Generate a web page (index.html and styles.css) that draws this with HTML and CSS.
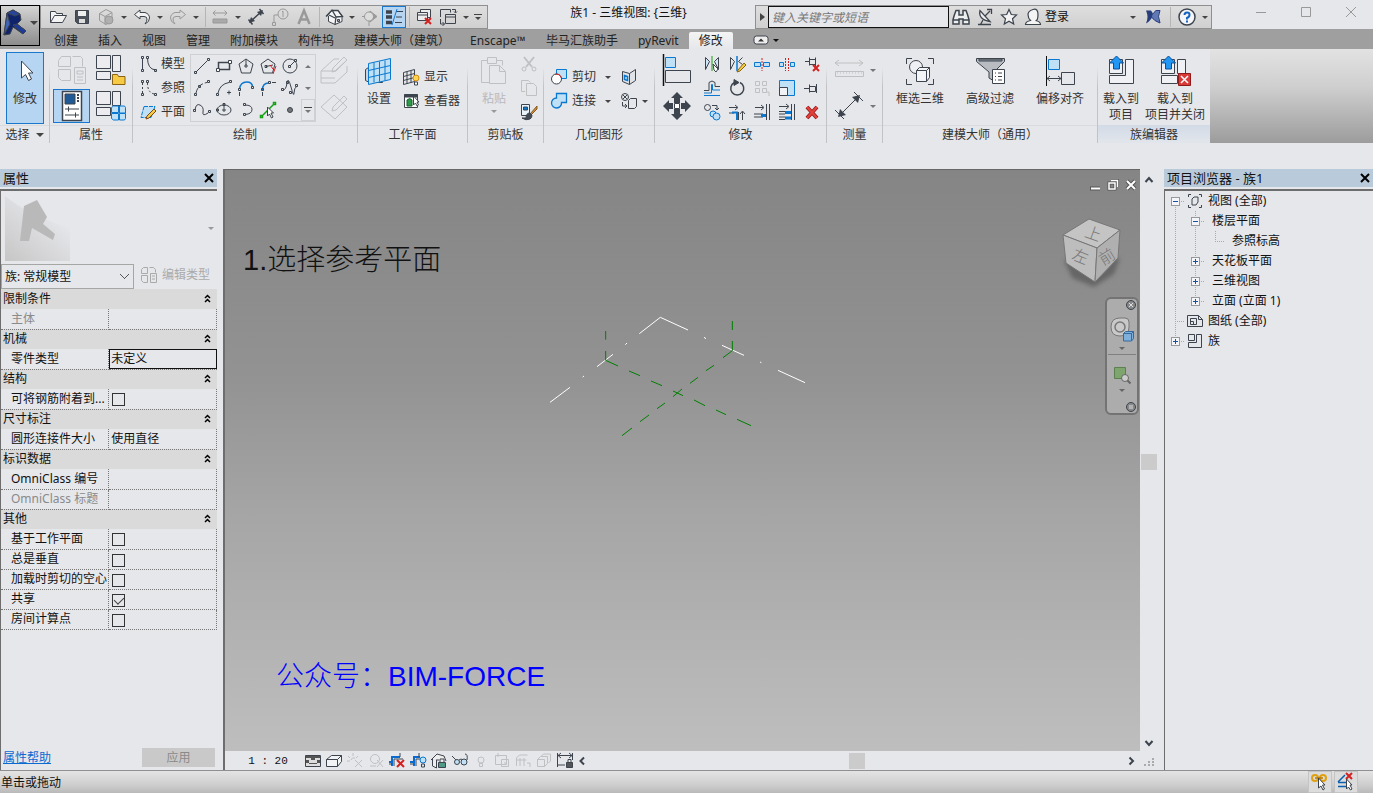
FILE: index.html
```html
<!DOCTYPE html>
<html lang="zh-CN">
<head>
  <meta charset="UTF-8"/>
  <meta name="viewport" content="width=device-width,initial-scale=1"/>
  <title>族1 - 三维视图: {三维}</title>
  <link rel="stylesheet" href="styles.css">
</head>
<body>
  <header class="top">
    <button class="app-btn" aria-label="应用程序菜单">
      <svg width="24" height="28" viewBox="0 0 24 28"><path d="M4 4 10 1 17 5 18 11 14 15 23 22 20 25 10 18 7 25 1 26z" fill="#10246b"/><path d="M4 4 10 1 17 5 12 7z" fill="#27459c"/><path d="M10 16 14 15 23 22 20 25z" fill="#1b3c9c"/><path d="M4 4 7 15 1 26z" fill="#3f64b8"/></svg>
      <i class="caret"></i>
    </button>
    <div class="titlebar">
      <div class="qat">
        <button aria-label="打开"><svg width="20" height="20"><path d="M2.500 15.500V4.500h5l1 2h6v2M2.500 15.500l4-7h12l-4 7z" fill="#f3f3f3"/></svg></button>
        <button aria-label="保存"><svg width="20" height="20"><path d="M3.500 3.500h13v13H5.500l-2-2z" fill="#4a515b"/><path d="M6 4h8v5H6z" fill="#eee" stroke="none"/><path d="M7 12h6v4H7z" fill="#ddd" stroke="none"/></svg></button>
        <button aria-label="同步"><svg class="dim" width="20" height="20"><path d="M3.500 6.500 10 2.500l6 3v9l-6 3-6.500-4zM3.500 6.500 9 9.500l7-4M9 9.500v8"/><circle cx="13" cy="13" r="4" fill="#b0b0b0"/></svg></button>
        <button class="drop" aria-label="同步选项"><i class="caret"></i></button>
        <button aria-label="放弃"><svg width="20" height="20"><path d="M8 3 2.500 7.500 8 12V9.500h4q3 0 3 2.500t-2 5q4.500-2 4.500-6T13 5.500H8z" fill="#f3f3f3"/></svg></button>
        <button class="drop" aria-label="放弃列表"><i class="caret"></i></button>
        <button aria-label="重做"><svg class="dim" width="20" height="20"><path d="M12 3l5.500 4.500L12 12V9.500H8q-3 0-3 2.500t2 5q-4.500-2-4.500-6T7 5.500h5z"/></svg></button>
        <button class="drop" aria-label="重做列表"><i class="caret"></i></button>
        <span class="sep"></span>
        <button aria-label="测量"><svg class="dim" width="20" height="20"><path d="M3 6h14M5.500 3.500 3 6l2.500 2.500M14.500 3.500 17 6l-2.500 2.500"/><path d="M3 12h14v4H3z" fill="#aaa"/></svg></button>
        <button class="drop" aria-label="测量选项"><i class="caret"></i></button>
        <button aria-label="对齐尺寸标注"><svg width="20" height="20"><path d="M5 14 15 5M2.500 12.500l4 5M13.500 2l4 5" stroke-width="1.500"/><path d="M3 16l2-6 4 4zM17 3l-2 6-4-4z" fill="#3d444e" stroke="none"/></svg></button>
        <button aria-label="按类别标记"><svg class="dim" width="20" height="20"><circle cx="13" cy="7" r="5"/><path d="M12 5l1-1v6M8 8H4v7M2.500 15.500h3v3h-3z"/></svg></button>
        <button aria-label="文字"><svg class="dim" width="20" height="20"><path d="M4.500 17 10 3.500 15.500 17M6.500 12.500h7" stroke-width="2.500"/></svg></button>
        <span class="sep"></span>
        <button aria-label="默认三维视图"><svg width="20" height="20"><path d="m3 8.500 5-5h6l4 5.500v5.500l-7 3-6.500-3V9z" fill="#f5f5f5"/><path d="M2 9.500 8 3l4 7-1 7.500M5 8l6 3M8 3.500l6 0 4.500 6-6.500.500" stroke-width="1.300"/><path d="M13.500 12.500h2v2h-2z" fill="#aab"/></svg></button>
        <button class="drop" aria-label="三维视图选项"><i class="caret"></i></button>
        <button aria-label="剖面"><svg class="dim" width="20" height="20"><path d="M10 4l7 5.500-7 5.500z" fill="#999"/><circle cx="9" cy="9.500" r="4.500" fill="#ddd"/><path d="M9 14v5M2 9.500h3"/></svg></button>
        <button class="on" aria-label="细线"><svg width="20" height="20"><path d="M2 5h6M2 10h6M2 15.500h6" stroke-width="3.500"/><path d="M12 4.500h7M12 10h6M11 15.500h7"/><path d="M13 2 8 18" stroke="#1478d2"/></svg></button>
        <span class="sep"></span>
        <button aria-label="关闭隐藏窗口"><svg width="20" height="20"><path d="M6.500 6V2.500h10v8h-3M3.500 5.500h10v8H3.500z" fill="#eee"/><path d="M3.500 8h10"/><path d="m11 11 6 6m0-6-6 6" class="red thick"/></svg></button>
        <button aria-label="切换窗口"><svg width="20" height="20"><path d="M2.500 10V2.500h10v3M7.500 7.500h10v9h-10zM7.500 10h10M14 2.500h3.500v3M16 4.500l1.500 1.500L19 4.500M2.500 12v5h4M4.500 15l2 2-2 2"/></svg></button>
        <button class="drop" aria-label="窗口列表"><i class="caret"></i></button>
        <button class="drop more" aria-label="自定义快速访问工具栏"><i class="caret"></i></button>
      </div>
      <h1>族1 - 三维视图: {三维}</h1>
      <div class="infocenter">
        <button class="drop" aria-label="展开搜索"><i class="caret right"></i></button>
        <input type="text" placeholder="键入关键字或短语" aria-label="搜索">
        <button aria-label="搜索帮助"><svg width="20" height="20"><path d="M3.500 7.500 5 3.500h3V8h4V3.500h3l1.500 4 1.500 5v4.500h-6V12H8v5H2v-4.500zM2 13h6M12 13h6" fill="#eee" stroke-width="1.500"/></svg></button>
        <button aria-label="通讯中心"><svg width="20" height="20"><path d="M5 3.500q-2 9 10 11z" fill="#eee" stroke-width="1.300"/><path d="M3 17.500h13M8 13l-2.500 4.500M10 9l5-5M12 2.500h4.500V7" stroke-width="1.300"/></svg></button>
        <button aria-label="收藏夹"><svg width="20" height="20"><path d="m10 2.500 2.300 5 5.200.500-4 3.700 1.200 5.300L10 14.200 5.300 17l1.200-5.300-4-3.700 5.200-.500z" fill="#f4f4f4" stroke-width="1.200"/></svg></button>
        <button class="login"><svg width="20" height="20"><path d="M2.500 17.500q0-3 5-4-2.500-2.500-2.500-6t5-5 5 5-2.500 6q5 1 5 4z" fill="#f4f4f4" stroke-width="1.200"/></svg>登录</button>
        <button class="drop" aria-label="登录选项"><i class="caret"></i></button>
        <button aria-label="Exchange"><svg width="20" height="20"><path d="M3 3.500h5q2 2 2 5-2 5-7 8 3-6.500 0-13z" fill="#273d7c" stroke="none"/><path d="M17 3.500h-4Q8 8 8.500 10q2.500 4 8.500 6-3-7 0-12.500z" fill="#6079b5" stroke="#273d7c"/></svg></button>
        <span class="sep"></span>
        <button aria-label="帮助"><svg width="20" height="20"><circle cx="10" cy="10" r="8" fill="#f4f6fa" stroke-width="1.500"/><path d="M7.500 8Q7.500 5.500 10 5.500t2.500 2.300T10 11v1.500" stroke="#1565c0" stroke-width="2"/><path d="M9 13.500h2v2H9z" fill="#1565c0" stroke="none"/></svg></button>
        <button class="drop" aria-label="帮助选项"><i class="caret"></i></button>
      </div>
      <div class="winbtns">
        <button aria-label="最小化"><svg width="12" height="12"><path d="M1 6.500h10"/></svg></button>
        <button aria-label="最大化"><svg width="12" height="12"><path d="M1.500 1.500h9v9h-9z"/></svg></button>
        <button aria-label="关闭"><svg width="12" height="12"><path d="m1 1 10 10M11 1 1 11"/></svg></button>
      </div>
    </div>
    <nav class="tabs">
      <button>创建</button><button>插入</button><button>视图</button><button>管理</button><button>附加模块</button><button>构件坞</button><button>建模大师（建筑）</button><button>Enscape™</button><button>毕马汇族助手</button><button>pyRevit</button><button class="active">修改</button>
      <button class="collapse" aria-label="最小化功能区"><svg width="16" height="10"><rect x="1" y="1" width="14" height="8" rx="2.500" fill="#eee"/><path d="m5 6.500 3-3 3 3z" fill="#333" stroke="none"/></svg><i class="caret"></i></button>
    </nav>
  </header>

  <div class="ribbon">
    <section class="panel select">
      <div class="body">
        <button class="big on"><svg width="32" height="32"><path d="M12.500 6v17l4-3.500 3 6 3-1.500-3-6h4.500z" fill="#fff"/></svg>修改</button>
      </div>
      <h2>选择 <i class="caret"></i></h2>
    </section>

    <section class="panel props">
      <div class="body">
        <button aria-label="类型属性"><svg class="faint" width="32" height="32"><path d="M2.500 6.500l3-4h9v10h-12zM16.500 2.500h8l2 2v8M2.500 15.500h12v11h-9l-3-3zM18.500 13.500h11v16h-11zM21 17h6v3h-6zM21 23h6M21 26h6"/></svg></button>
        <button aria-label="族类别和族参数"><svg width="32" height="32"><path d="M1.500 1.500h14v13h-14zM17.500 1.500h8v16h-8zM1.500 17.500h14v8h-14z" fill="#ececf0"/><path d="M17.500 20.500h5l1 2h6.500v8H17.500z" fill="#f6ca45" stroke="#8a6414"/></svg></button>
        <button class="on" aria-label="属性"><svg width="32" height="32"><path d="M6.500 1.500h19v29h-19z" fill="#fff" stroke-width="1.500"/><path d="M9 4h10v10H9z" fill="#1f5a96"/><path d="M21 5h2M21 8h2M21 11h2" stroke-width="2"/><path d="M9 19h14M12.500 16.500v5M9 25h14M19.500 22.500v5"/></svg></button>
        <button aria-label="族类型"><svg width="32" height="32"><path d="M1.500 1.500h14v13h-14zM17.500 1.500h8v14h-8zM1.500 17.500h14v8h-14z" fill="#ececf0"/><path class="b" d="M16.500 17.500l2-1.500h5v6.500h-7zM24.500 16h5l1 1.500v5.500h-6zM16.500 23.500h7V30h-5l-2-1.500zM24.500 23.500h6v5l-1 1.500h-5z"/></svg></button>
      </div>
      <h2>属性</h2>
    </section>

    <section class="panel draw">
      <div class="body">
        <div class="rows">
          <button><svg width="18" height="18"><path d="M3.500 3v12M8.500 3q0 11 8 12M2.500 1.500h2v2h-2zM2.500 14.500h2v2h-2zM7.500 1.500h2v2h-2zM15.500 14.500h2v2h-2z"/></svg>模型</button>
          <button><svg width="18" height="18"><path d="M3.500 4v11M8.500 4q0 10 7 11" stroke-dasharray="2"/><path d="M2.500 1.500h2v2h-2zM2.500 14.500h2v2h-2zM7.500 1.500h2v2h-2zM15.500 14.500h2v2h-2z"/></svg>参照</button>
          <button><svg width="18" height="18"><path class="b" d="M5 3.500h11l-4 11H2z" stroke-dasharray="4 1"/><path d="m7 16 1-3 7-7 2 2-7 7z" fill="#f6ca45" stroke="#7b4b15"/></svg>平面</button>
        </div>
        <div class="gallery">
          <div class="shapes">
            <button aria-label="直线"><svg width="18" height="18"><path d="M3 15 14 4M1.500 14.500h2v2h-2zM14.500 1.500h2v2h-2z"/></svg></button>
            <button aria-label="矩形"><svg width="18" height="18"><path d="M3.500 5.500h11v7h-11z" stroke-width="1.500"/><path d="M1.500 11.500h3v3h-3zM13.500 3.500h3v3h-3z" fill="#fff"/></svg></button>
            <button aria-label="内接多边形"><svg width="18" height="18"><path d="m9 2 7 5-2.500 9h-9L2 7zM9 2v6M8 8h2v2H8z"/></svg></button>
            <button aria-label="外接多边形"><svg width="18" height="18"><path d="m9 2 7 5-2.500 9h-9L2 7zM7 9.500l7-1.500M6 8.500h2v2H6z"/><path d="m17 9-3 8M11 8l3 4" class="red"/></svg></button>
            <button aria-label="圆形"><svg width="18" height="18"><circle cx="9" cy="9" r="7"/><path d="m9 9 5-5M7.500 8.500h2v2h-2zM13.500 2.500h2v2h-2z"/></svg></button>
            <button aria-label="起点-终点-半径弧"><svg width="18" height="18"><path d="M3 14Q5 5 14 3.500" stroke-dasharray="5 2"/><path d="M1.500 14.500h2v2h-2zM14.500 1.500h2v2h-2zM5.500 6.500h2v2h-2z"/></svg></button>
            <button aria-label="圆心-端点弧"><svg width="18" height="18"><path d="M3 14Q5 5 14 3.500M1.500 14.500h2v2h-2zM14.500 1.500h2v2h-2zM12 13.500h4M14 11.500v4"/></svg></button>
            <button aria-label="相切-端点弧"><svg width="18" height="18"><path d="M2.500 10q1-7 7-7t6 5" stroke="#0a78d0" stroke-width="1.500"/><path d="M2.500 13v4M1.500 9.500h2v2h-2zM14.500 7.500h2v2h-2z"/></svg></button>
            <button aria-label="圆角弧"><svg width="18" height="18"><path d="M3.500 11q0-7 6-7" stroke="#0a78d0" stroke-width="1.500"/><path d="M3.500 13v4M13 3.500h4M2.500 9.500h2v2h-2zM9.500 2.500h2v2h-2z"/></svg></button>
            <button aria-label="样条曲线"><svg width="18" height="18"><path d="M2 11q3 0 4-7t4 4 3 6 3-7M.500 9.500h2v2h-2zM5.500 2.500h2v2h-2zM8.500 12.500h2v2h-2zM14.500 5.500h2v2h-2z"/></svg></button>
            <button aria-label="椭圆"><svg width="18" height="18"><path d="M2 9q1-7 5-5t3 7 5 1M.500 8.500h2v2h-2zM15.500 9.500h2v2h-2z"/></svg></button>
            <button aria-label="全椭圆"><svg width="18" height="18"><ellipse cx="9" cy="9" rx="7" ry="5"/><path d="M7 9h4M9 3v8M8 2.500h2v2H8zM1.500 8h2v2h-2z"/></svg></button>
            <button aria-label="半椭圆"><svg width="18" height="18"><path d="M8 4q7 0 7 4.500T8 13.500M6.500 2.500h2v2h-2zM6.500 12.500h2v2h-2z"/></svg></button>
            <button aria-label="拾取线"><svg width="18" height="18"><path d="M3 15 15 3M1.500 14.500h2v2h-2zM14.500 1.500h2v2h-2z" stroke="#16a016" stroke-width="1.500"/><path d="M8.500 6v9l2-2 2 4 1.500-1-2-4h2.500z" fill="#fff"/></svg></button>
            <button aria-label="点图元"><svg width="18" height="18"><circle cx="9" cy="9" r="2.500" fill="#777"/></svg></button>
          </div>
          <div class="scroll">
            <button aria-label="上一行"><i class="caret up"></i></button>
            <button aria-label="下一行"><i class="caret"></i></button>
            <button class="more" aria-label="更多"><i class="caret"></i></button>
          </div>
        </div>
        <div class="pair">
          <button aria-label="拾取面"><svg class="faint" width="32" height="32"><path d="m2 17 13-12h5M28 12v6L16 29H2V17h14l12-11M2 24h14M14 14 25 3l3 3-11 11-4 1z"/></svg></button>
          <button aria-label="拾取工作平面"><svg class="faint" width="32" height="32"><path d="m2 17 13-12 13 12-12 12zM14 17 25 6l3 3-11 11-4 1z"/></svg></button>
        </div>
      </div>
      <h2>绘制</h2>
    </section>

    <section class="panel workplane">
      <div class="body">
        <button class="big"><svg width="32" height="32"><path d="M2.500 14.500l3-2h14v15h-13l-4-2z" fill="#cfd2d8"/><path class="b" d="m5.500 8.500 22-5v21l-22 5z"/><path class="b" d="M11 7.500v20M16.500 6.500v20M22 5.500v20M5.500 15.500l22-5M5.500 22.500l22-5"/></svg>设置</button>
        <div class="rows mid">
          <button><svg width="18" height="18"><path d="m1.500 4.500 11-3v12l-11 3zM5 4v12M9 3v12M1.500 8.500l11-3M1.500 12.500l11-3"/><circle cx="14" cy="10" r="3" fill="#ffd34d" stroke="#d08a10"/><path d="M12.500 14h3v3h-3z" fill="#fff"/></svg>显示</button>
          <button><svg width="18" height="18"><path d="M2.500 2.500h13v13h-13z" fill="#fff"/><path d="M2 4h14" stroke-width="3"/><path d="M5 8q3-3 5 0v6H5z" fill="#2e9a4a" stroke="#14602a"/><path d="M11.500 4v9l2-2 1.500 3 1.500-1-1.500-3H17z" fill="#fff"/></svg>查看器</button>
        </div>
      </div>
      <h2>工作平面</h2>
    </section>

    <section class="panel clip">
      <div class="body">
        <button class="big off"><svg class="faint" width="32" height="32"><path d="M9.500 5.500h-6v22h8M9.500 2.500h9v6h-9zM18.500 5.500h6v5M11.500 10.500h10l6 6v12h-16zM21.500 10.500v6h6"/></svg>粘贴<i class="caret"></i></button>
        <div class="rows">
          <button aria-label="剪切到剪贴板"><svg class="faint" width="18" height="18"><path d="m4 2 8 10M14 2 6 12" stroke-width="2"/><circle cx="4" cy="14" r="2"/><circle cx="14" cy="14" r="2"/></svg></button>
          <button aria-label="复制到剪贴板"><svg class="faint" width="18" height="18"><path d="M5 12.500H1.500v-11h7l2 2M6.500 4.500h7l3 3v9h-10z"/></svg></button>
          <button aria-label="匹配类型属性"><svg width="18" height="18"><path d="M1.500 1.500h8v11h-8z" fill="#e8f3fb"/><path d="M3.500 4h4v3h-4z" fill="#0a78d0"/><path d="M17 3v3l-6 6-1-1z" fill="#c98c3a" stroke="#8a5a1c"/><path d="M10 10q-4 0-4 5H2q4 3 8 1 2-1 2-4z" fill="#444b55"/></svg></button>
        </div>
      </div>
      <h2>剪贴板</h2>
    </section>

    <section class="panel geom">
      <div class="body">
        <div class="rows mid">
          <button><svg width="18" height="18"><path class="b" d="M6.500 1.500h10v9h-10z"/><circle cx="6.500" cy="11" r="5" fill="#fff"/><path d="M5 6.300a5 5 0 0 1 6.500 4.200" class="red"/></svg>剪切</button>
          <button><svg width="18" height="18"><path class="b" d="M6.500 1.500h10v9h-5a5 5 0 1 1-5-4.500z" stroke-width="1.300"/></svg>连接</button>
        </div>
        <div class="rows mid tiny">
          <button aria-label="剪切选项"><i class="caret"></i></button>
          <button aria-label="连接选项"><i class="caret"></i></button>
        </div>
        <div class="rows mid">
          <button aria-label="拆分面"><svg width="18" height="18"><path d="m2.500 3.500 7 2 6-4v11l-6 4-7-3z" fill="#dfe3e8"/><path d="M9.500 5.500v11"/><path class="b" d="m4.500 7.500 3 1v4l-3-1z" stroke-width="1.500"/></svg></button>
          <button aria-label="更多几何图形"><svg width="18" height="18"><circle cx="5" cy="5" r="3.500"/><path d="m3 3 4 4M7 3 3 7M8.500 8.500l2-2h6v8l-2 2h-6zM2.500 10v4h4M5 12l2 2-2 2"/></svg><i class="caret"></i></button>
        </div>
      </div>
      <h2>几何图形</h2>
    </section>

    <section class="panel modify">
      <div class="body">
        <div class="pair">
          <button aria-label="对齐"><svg width="32" height="32"><path d="M2.500 0v32" stroke-width="1.500" stroke="#111"/><path class="b" d="M4.500 3.500h10v10h-10z"/><path d="M4.500 16.500h25v12h-25z"/></svg></button>
          <button aria-label="移动"><svg width="32" height="32"><path d="M16 2l6 6h-3v5h-6V8h-3zM16 30l6-6h-3v-5h-6v5h-3zM2 16l6-6v3h4v6H8v3zM30 16l-6-6v3h-4v6h4v3z" fill="#3d444e" stroke="none"/><path d="M13.500 13.500h5v5h-5z" fill="#fff"/></svg></button>
        </div>
        <div class="tools">
          <button aria-label="镜像-拾取轴"><svg width="18" height="18"><path d="M2.500 2.500l4 4-4 8zM15.500 2.500l-4 4 4 8z" fill="#cfe6f6"/><path d="M9 1v15" stroke="#16a016"/><path d="m10 9 5 5-2 3-2-2z" fill="#fff"/></svg></button>
          <button aria-label="镜像-绘制轴"><svg width="18" height="18"><path d="M2.500 2.500l4 4-4 8zM14.500 2.500l-4 4 4 3"/><path d="M9 1v15" stroke="#0a78d0" stroke-width="1.500"/><path d="m10 15 6-7 2 2-6 6-3 1z" fill="#f6ca45" stroke="#8a6414"/></svg></button>
          <button aria-label="拆分图元"><svg width="18" height="18"><path class="b" d="M1.500 7.500h6v4h-6zM10.500 7.500h6v4h-6z"/><path d="M9 3v13" class="red" stroke-dasharray="2 1"/></svg></button>
          <button aria-label="用间隙拆分"><svg width="18" height="18"><path class="b" d="M1.500 7.500h4v4h-4zM12.500 7.500h4v4h-4z"/><path d="M7.500 3v13M10.500 3v13" class="red" stroke-dasharray="2 1"/></svg></button>
          <button aria-label="解锁"><svg width="18" height="18"><path d="M2 6.500h4M6.500 2.500v8M6.500 4.500h6v5h-6M12.500 2.500v9"/><path d="m10 10 6 6m0-6-6 6" class="red thick"/></svg></button>
          <button aria-label="偏移"><svg width="18" height="18"><path d="M1 11.500h5v-8q3-3 6 0v4h5"/><path d="M1 14h7.500V5.500h1V11H17M1 16.500h16" stroke="#0a78d0"/></svg></button>
          <button aria-label="旋转"><svg width="18" height="18"><path d="M6.500 3.500a6.500 6.500 0 1 0 5.500 0" stroke-width="1.500"/><path d="m6 .500 5 3-5 3z" fill="#3d444e"/></svg></button>
          <button aria-label="阵列"><svg class="faint" width="18" height="18"><path d="M2.500 2.500h4v4h-4zM9.500 2.500h4v4h-4zM2.500 9.500h4v4h-4zM9.500 9.500h4v4h-4zM13 13h3v4"/></svg></button>
          <button aria-label="缩放"><svg width="18" height="18"><path class="b" d="M1.500 1.500h15v15h-15z"/><path d="M1.500 8.500h8v8h-8z" fill="#f1f2f5"/></svg></button>
          <button aria-label="锁定"><svg width="18" height="18"><path d="M1 9.500h5M6.500 5.500v8M6.500 7.500h6v5h-6M13.500 5v9"/></svg></button>
          <button aria-label="复制"><svg width="18" height="18"><circle cx="4.500" cy="4.500" r="3"/><path d="M9 2.500h5v4M12 5l2 2 2-2"/><circle class="b" cx="10" cy="11" r="3"/><circle class="b" cx="13.500" cy="13.500" r="3.500"/></svg></button>
          <button aria-label="修剪为角"><svg width="18" height="18"><path d="M1 4.500h8M7 2l3 2.500L7 7M1 10h5M14.500 17V9M12 11l2.500-3 2.500 3M10.500 17V9"/><path d="M4 9.500h5V17" stroke="#0a78d0" stroke-width="2"/></svg></button>
          <button aria-label="修剪单个"><svg width="18" height="18"><path d="M2 4.500h8M8 2l3 2.500L8 7M1 11h9M1 14h9M13.500 1v16M16.500 1v16"/><path d="M8 12.500h5" stroke="#0a78d0" stroke-width="3"/></svg></button>
          <button aria-label="修剪多个"><svg width="18" height="18"><path d="M1 3.500h9M8 1l3 2.500L8 6M1 8.500h6M1 11h6M1 14h6M1 16.500h6M13.500 1v16M16.500 1v16"/><path d="M7 9.500h6M7 15h6" stroke="#0a78d0" stroke-width="3"/></svg></button>
          <button aria-label="删除"><svg width="18" height="18"><path d="m4 4 10 11M14 4 4 15" stroke="#8f1a1a" stroke-width="4"/><path d="m4 4 10 11M14 4 4 15" stroke="#e2403a" stroke-width="2.500"/></svg></button>
        </div>
      </div>
      <h2>修改</h2>
    </section>

    <section class="panel measure">
      <div class="body">
        <div class="pair">
          <button aria-label="测量两个参照"><svg class="faint" width="32" height="32"><path d="M2 9h28M6 6 2 9l4 3M26 6l4 3-4 3M2.500 17.500h28v5h-28z"/><path d="M4 19h26" stroke-dasharray="1 2"/></svg><i class="caret"></i></button>
          <button aria-label="对齐尺寸"><svg width="32" height="32"><path d="M7 25 25 7M2 20l9 9M21 2l9 9"/><path d="m5 27 2-8 6 6zM27 5l-2 8-6-6z" fill="#3d444e" stroke="none"/></svg><i class="caret"></i></button>
        </div>
      </div>
      <h2>测量</h2>
    </section>

    <section class="panel bim">
      <div class="body">
        <button class="big"><svg width="32" height="32"><path d="M8 3.500H2.500V9M24 3.500h5.500V9M2.500 24v5.500H8M29.500 24v5.500H24"/><circle cx="12" cy="12" r="6.500" fill="#eef0f3"/><path d="m12.500 15.500 3-3h10v10l-3 4h-10zM12.500 15.500h10v11M22.500 15.500l3-3" fill="#f3f4f6"/></svg>框选三维</button>
        <button class="big"><svg width="32" height="32"><path d="M2.500 3.500h28v3L20 17v9l-5-3v-6L2.500 6.500z" fill="#b9bcc1"/><path d="M5 4h23v2H5z" fill="#8b9096"/><path d="M18.500 14.500h12v14h-12z" fill="#fff"/><path d="M21 18h1M21 21.500h1M21 25h1M24 18h4M24 21.500h4M24 25h4"/></svg>高级过滤</button>
        <button class="big"><svg width="32" height="32"><path d="M2.500 1v30" stroke="#111"/><path class="b" d="M4.500 4.500h11v10h-11z"/><path d="M17.500 17.500h13v12h-13zM3 23.500h14M6 21l-3 2.500L6 26M14 21l3 2.500-3 2.500"/></svg>偏移对齐</button>
      </div>
      <h2>建模大师（通用）</h2>
    </section>

    <section class="panel family">
      <div class="body">
        <button class="big"><svg width="32" height="32"><path d="M4.500 4.500h13v14h-13zM20.500 4.500h8v24h-24v-8h16z" fill="#f0f1f4"/><path d="m11.500 1 7 7h-4v6h-6V8h-4z" fill="#2196f3" stroke="#0b4f96"/></svg>载入到<br>项目</button>
        <button class="big wide"><svg width="32" height="32"><path d="M2.500 4.500h13v14h-13zM18.500 4.500h8v14h-8zM2.500 20.500h16v8h-16z" fill="#f0f1f4"/><path d="m9.500 1 7 7h-4v6h-6V8h-4z" fill="#2196f3" stroke="#0b4f96"/><path d="M19.500 18.500h12v12h-12z" fill="#d83a3a" stroke="#8f1a1a"/><path d="m22 21 7 7m0-7-7 7" stroke="#fff" stroke-width="1.500"/></svg>载入到<br>项目并关闭</button>
      </div>
      <h2>族编辑器</h2>
    </section>
    <div class="tail"></div>
  </div>

  <main>
    <aside class="properties">
      <div class="dock-title"><h3>属性</h3><button aria-label="关闭属性"><svg width="10" height="10"><path d="m1 1 8 8M9 1 1 9"/></svg></button></div>
      <div class="dock-body">
        <div class="preview">
          <svg width="65" height="65" viewBox="0 0 65 65">
            <defs><linearGradient id="pv" x1="0" y1="1" x2=".7" y2=".2"><stop offset="0" stop-color="#c6c6c6"/><stop offset="1" stop-color="#e6e7eb"/></linearGradient></defs>
            <path d="M0 0q25 20 65 32v33H0z" fill="url(#pv)" stroke="none"/>
            <path d="M19 10 32 4l10 17-4 7 12 10-2 6-21-12-3 13-9 0z" fill="#b9b9b9" stroke="none"/>
          </svg>
          <i class="caret"></i>
        </div>
        <div class="type-row">
          <select aria-label="族类型"><option>族: 常规模型</option></select>
          <button disabled><svg class="faint" width="18" height="18"><path d="M1.500 3.500l2-2h4v6h-6zM9.500 1.500h4l2 2v3M1.500 9.500h6v7h-4l-2-2zM10.500 7.500h6v9h-6zM12 10h3M12 13h3"/></svg>编辑类型</button>
        </div>
        <table>
          <tbody>
            <tr class="cat"><th colspan="2">限制条件<svg width="9" height="9"><path d="m2 4 2.500-2.500L7 4M2 8l2.500-2.500L7 8"/></svg></th></tr>
            <tr class="off"><td>主体</td><td></td></tr>
            <tr class="cat"><th colspan="2">机械<svg width="9" height="9"><path d="m2 4 2.500-2.500L7 4M2 8l2.500-2.500L7 8"/></svg></th></tr>
            <tr><td>零件类型</td><td class="focus">未定义</td></tr>
            <tr class="cat"><th colspan="2">结构<svg width="9" height="9"><path d="m2 4 2.500-2.500L7 4M2 8l2.500-2.500L7 8"/></svg></th></tr>
            <tr><td><label for="p1">可将钢筋附着到...</label></td><td><input type="checkbox" id="p1"></td></tr>
            <tr class="cat"><th colspan="2">尺寸标注<svg width="9" height="9"><path d="m2 4 2.500-2.500L7 4M2 8l2.500-2.500L7 8"/></svg></th></tr>
            <tr><td>圆形连接件大小</td><td>使用直径</td></tr>
            <tr class="cat"><th colspan="2">标识数据<svg width="9" height="9"><path d="m2 4 2.500-2.500L7 4M2 8l2.500-2.500L7 8"/></svg></th></tr>
            <tr><td>OmniClass 编号</td><td></td></tr>
            <tr class="off"><td>OmniClass 标题</td><td></td></tr>
            <tr class="cat"><th colspan="2">其他<svg width="9" height="9"><path d="m2 4 2.500-2.500L7 4M2 8l2.500-2.500L7 8"/></svg></th></tr>
            <tr><td><label for="p2">基于工作平面</label></td><td><input type="checkbox" id="p2"></td></tr>
            <tr><td><label for="p3">总是垂直</label></td><td><input type="checkbox" id="p3"></td></tr>
            <tr><td><label for="p4">加载时剪切的空心</label></td><td><input type="checkbox" id="p4"></td></tr>
            <tr><td><label for="p5">共享</label></td><td><input type="checkbox" id="p5" checked></td></tr>
            <tr><td><label for="p6">房间计算点</label></td><td><input type="checkbox" id="p6"></td></tr>
          </tbody>
        </table>
        <div class="dock-foot"><a href="#">属性帮助</a><button disabled>应用</button></div>
      </div>
    </aside>

    <section class="view">
      <div class="canvas">
        <p class="note step">1.选择参考平面</p>
        <p class="note credit">公众号：BIM-FORCE</p>
        <svg class="planes" width="300" height="150" viewBox="0 0 900 450">
          <path stroke="#fff" d="M60 307 120 262M158 231 162 228M201 200 249 163M286 134 291 129M328 101 391 52 474 90M522 112 528 116M576 136 642 166M690 186 694 188M744 211 825 248"/>
          <path stroke="#008000" d="M227 93V119M227 153V181M607 63V90M607 123V152M227 181 264 198M297 213 330 227M363 243 396 257M429 273 459 287M492 300 525 317M558 330 588 344M621 358 663 377M607 152 579 173M552 196 528 212M504 232 480 250M456 267 429 290M405 309 381 326M357 345 330 365M306 384 276 407"/>
        </svg>
        <div class="doc-btns">
          <button aria-label="最小化视图"><svg width="12" height="12"><path d="M1 9.500h10" stroke="#555" stroke-width="4"/><path d="M2 9.500h9" stroke="#fff" stroke-width="2"/></svg></button>
          <button aria-label="还原视图"><svg width="12" height="12"><path d="M4 1.500h6.500V8M2 4h6v6H2z" stroke="#555" stroke-width="3"/><path d="M4 1.500h6.500V8M2 4h6v6H2z" stroke="#fff" stroke-width="1.500"/></svg></button>
          <button aria-label="关闭视图"><svg width="12" height="12"><path d="m2 2 8 8M10 2l-8 8" stroke="#555" stroke-width="4"/><path d="m2 2 8 8M10 2l-8 8" stroke="#fff" stroke-width="2"/></svg></button>
        </div>
        <svg class="cube" width="64" height="78" viewBox="0 0 64 78">
          <defs><filter id="soft" x="-30%" y="-50%" width="160%" height="200%"><feGaussianBlur stdDeviation="2"/></filter></defs>
          <path d="M4 44 60 42 54 58 34 71 12 62z" fill="#666" stroke="none" filter="url(#soft)"/>
          <path d="M3 19 29 3 60 14 37 32z" fill="#c4c4c4"/><path d="M3 19 37 32 35 66 6 47z" fill="#bdbdbd"/><path d="M37 32 60 14 58 42 35 66z" fill="#b0b0b0"/>
          <text x="25" y="23" transform="rotate(20 32 18)">上</text>
          <text x="12" y="46" transform="rotate(22 20 42)">左</text>
          <text x="40" y="46" transform="rotate(-32 48 42)">前</text>
        </svg>
        <div class="navbar">
          <button aria-label="关闭导航栏"><svg width="10" height="10"><circle cx="5" cy="5" r="4.500" fill="#888"/><path d="m3 3 4 4M7 3 3 7" stroke="#ddd"/></svg></button>
          <button class="wheel" aria-label="控制盘"><svg width="28" height="28"><path d="M3 12Q3 3 12 3h5q4 0 4 4v5q0 9-9 9t-9-9z" fill="#c9c9c9" stroke="#777"/><circle cx="12" cy="12" r="5" fill="#c9c9c9" stroke="#777" stroke-width="1.500"/><path d="m15.500 18.500 2-2h8v7l-2 2.500h-8zM15.500 18.500h8v7M23.500 18.500l2-2" fill="#7fb0dc" stroke="#37699c"/></svg><i class="caret"></i></button>
          <button class="zoom" aria-label="缩放"><svg width="20" height="20"><path d="M2.500 2.500h11v11h-11z" fill="#7fa56e" stroke="#5c8050"/><circle cx="13" cy="13" r="3.500" fill="#ccc" stroke="#666"/><path d="m15.500 15.500 3 3" stroke="#666" stroke-width="2"/></svg><i class="caret"></i></button>
          <button aria-label="导航栏选项"><svg width="10" height="10"><circle cx="5" cy="5" r="4.500" fill="#888"/><path d="M3 4h4M3 6h4" stroke="#ddd"/></svg></button>
        </div>
      </div>
      <div class="vscroll">
        <button aria-label="向上滚动"><svg width="10" height="10"><path d="M1.500 7 5 3l3.500 4"/></svg></button>
        <span class="thumb"></span>
        <button aria-label="向下滚动"><svg width="10" height="10"><path d="M1.500 3 5 7l3.500-4"/></svg></button>
        <svg class="grip" width="10" height="10"><path d="M8 2h2M4 5h2M8 5h2M0 8h2M4 8h2M8 8h2" stroke="#aaa"/></svg>
      </div>
      <div class="viewbar">
        <button class="scale">1 : 20</button>
        <button aria-label="详细程度"><svg width="18" height="18"><path d="M1.500 3.500h15v11h-15z" fill="#ddd"/><path d="M2 4h14v2H2zM2 8h3v3H2zM7 6h4v2H7zM13 8h3v3h-3zM5 11h8v1H5z" fill="#555" stroke="none"/></svg></button>
        <button aria-label="视觉样式"><svg width="18" height="18"><path d="m1.500 7.500 5-4h10v6l-4 5h-11zM1.500 7.500h11v7M12.500 7.500l4-4" fill="#f2f3f5"/></svg></button>
        <button aria-label="日光路径"><svg class="faint" width="18" height="18"><path d="M7 1v3M2 4l2 2M1 9h3M12 4l-2 2M5 8q1-3 4-2M9 8l7 7m0-7-7 7"/></svg></button>
        <button aria-label="阴影"><svg class="faint" width="18" height="18"><circle cx="8" cy="7" r="4.500"/><path d="M3 14h6M10 8l6 7m0-7-6 7"/></svg></button>
        <button aria-label="裁剪视图"><svg width="18" height="18"><path d="M1 10h3M4 14V5h8" stroke="#0a6ad0" stroke-width="2"/><path d="M6 14V7h9M12 1v4M1 12h3"/><path d="m9 8 7 7m0-7-7 7" class="red thick"/></svg></button>
        <button aria-label="显示裁剪区域"><svg width="18" height="18"><path d="M1 10h3M5 14V5h6" stroke="#0a6ad0" stroke-width="2"/><path d="M7 14V7h4M10 1v4M1 12h3"/><circle class="b" cx="14" cy="8" r="3"/><path d="M12.500 12h3v3h-3z"/></svg></button>
        <button aria-label="锁定三维视图"><svg width="18" height="18"><path d="M1 8l6-6 7 2 2 5M2.500 7v7l4 2V8M6 8h3" fill="#eee"/><path d="M8.500 10.500h7v5h-7z" fill="#4f9a84"/><path d="M10 10V7h4v3"/></svg></button>
        <button aria-label="临时隐藏"><svg width="18" height="18"><path d="M1 4l4 4M8 8q2-2 4 0M14 2q3 0 2 6"/><circle cx="6" cy="10" r="2.500" fill="#bfe0f5"/><circle cx="13" cy="10" r="3" fill="#bfe0f5"/></svg></button>
        <button aria-label="显示隐藏的图元"><svg class="faint" width="18" height="18"><circle cx="9" cy="8" r="3"/><path d="M7.500 11.500h3v3h-3z"/></svg></button>
        <button aria-label="临时视图属性"><svg class="faint" width="18" height="18"><path d="M2.500 3.500h11v9h-11zM8.500 7.500h7v7h-7zM11 11h3M5 1v4"/></svg></button>
        <button aria-label="分析模型"><svg class="faint" width="18" height="18"><path d="M2.500 14V6l3-3h8M2.500 8h10M6 14V6M10 14V6M13 11h3v4"/></svg></button>
        <button aria-label="位移集"><svg class="faint" width="18" height="18"><path d="m2.500 7.500 3-3h7v7l-3 3h-7zM6.500 4l2-2h7v7l-2 2M2.500 7.500h7v7"/></svg></button>
        <button aria-label="显示约束"><svg width="18" height="18"><path d="M1.500 1v14M16.500 1v7M2 3.500h14M5 1 2 3.500 5 6M13 1l3 2.500L13 6M2 13h7"/><path d="M10.500 10.500h6v5h-6z" fill="#555"/><path d="M12 10V7.500h3V10"/></svg></button>
        <button class="arrow" aria-label="向左滚动"><svg width="10" height="10"><path d="M7 1.500 3.500 5 7 8.500"/></svg></button>
        <span class="thumb"></span>
        <button class="arrow" aria-label="向右滚动"><svg width="10" height="10"><path d="M3.500 1.500 7 5 3.500 8.500"/></svg></button>
      </div>
    </section>

    <aside class="browser">
      <div class="dock-title"><h3>项目浏览器 - 族1</h3><button aria-label="关闭项目浏览器"><svg width="10" height="10"><path d="m1 1 8 8M9 1 1 9"/></svg></button></div>
      <ul class="dock-body tree">
        <li><span class="cell start arm"><button class="minus" aria-label="折叠"></button></span><span class="cell"><svg width="16" height="16"><path d="M4 1.500H1.500V4M12 1.500h2.500V4M1.500 12v2.500H4M14.500 12v2.500H12M5 6l2-2h4v5l-2 3H5z"/></svg></span><b>视图 (全部)</b></li>
        <li><span class="cell line"></span><span class="cell line arm"><button class="minus" aria-label="折叠"></button></span><b class="sub">楼层平面</b></li>
        <li><span class="cell line"></span><span class="cell line"></span><span class="cell end arm"></span><b class="sub">参照标高</b></li>
        <li><span class="cell line"></span><span class="cell line arm"><button class="plus" aria-label="展开"></button></span><b class="sub">天花板平面</b></li>
        <li><span class="cell line"></span><span class="cell line arm"><button class="plus" aria-label="展开"></button></span><b class="sub">三维视图</b></li>
        <li><span class="cell line"></span><span class="cell end arm"><button class="plus" aria-label="展开"></button></span><b class="sub">立面 (立面 1)</b></li>
        <li><span class="cell line arm"></span><span class="cell"><svg width="16" height="16"><path d="M.500 2.500h11l4 4v7H.500zM11.500 2.500v4h4M3.500 5.500h6v6h-6zM3.500 8.500h3v3"/></svg></span><b>图纸 (全部)</b></li>
        <li><span class="cell end arm"><button class="plus" aria-label="展开"></button></span><span class="cell"><svg width="16" height="16"><path d="M1.500 1.500h6v6h-6zM9.500 1.500h5v13h-13v-5h8z"/></svg></span><b>族</b></li>
      </ul>
    </aside>
  </main>

  <footer class="status">
    <span>单击或拖动</span>
    <button aria-label="选择链接"><svg width="20" height="20"><circle cx="5" cy="6" r="3" stroke="#e0a010" stroke-width="2"/><circle cx="13" cy="6" r="3" stroke="#e0a010" stroke-width="2"/><path d="M5 6h8" stroke="#b87800" stroke-width="1.500"/><path d="M8.500 6v10l2.500-2 2 4 1.500-1-2-4H15z" fill="#fff"/></svg></button>
    <button aria-label="选择基线图元"><svg width="20" height="20"><path d="M2 10 9 3M2 10.500h8M2 14.500h8" stroke="#0a5fb0" stroke-width="1.500"/><path d="m10 1 6 6m0-6-6 6" class="red thick"/><path d="M10.500 7v10l2-2 2 3 1.500-1-2-4H16z" fill="#fff"/></svg></button>
  </footer>
</body>
</html>
```
FILE: styles.css
```css
:root {
  --bg: #e6e7eb;
  --ink: #3d444e;
  --line: #c2c3c6;
  --dock: #b9cadb;
}
* { box-sizing: border-box; }
body {
  margin: 0; display: flex; flex-direction: column; height: 100vh; overflow: hidden;
  background: var(--bg); color: #111;
  font: 12px/16px "Noto Sans", "Noto Sans CJK SC", sans-serif;
}
h1, h2, h3, p, ul { margin: 0; padding: 0; font-weight: 400; font-size: 12px; }
button {
  display: flex; align-items: center; justify-content: center;
  background: none; border: 0; padding: 0; margin: 0;
  font: inherit; color: inherit; white-space: nowrap;
}
svg { display: block; flex: none; fill: none; stroke: var(--ink); }
svg.dim { stroke: #999; }
svg.faint { stroke: #bfc0c2; }
.b { fill: #bfe0f5; stroke: #0a78d0; }
.red { stroke: #d42020; }
.thick { stroke-width: 2; }
.caret {
  display: block; flex: none; width: 0; height: 0;
  border: 3px solid transparent; border-top-color: #444; border-bottom: 0;
}
.caret.up { border-top: 0; border-bottom: 3px solid #777; }
.caret.right { border: 4px solid transparent; border-left: 5px solid #444; border-right: 0; }
.on { background: #b5d5f2; border: 1px solid #1a78cc; }
.more { flex-direction: column; gap: 2px; }
.more::before { content: ""; width: 8px; border-top: 1px solid #444; }

/* title bar and tabs */
.top {
  display: grid; grid-template: 29px 20px / 40px 1fr;
  background: linear-gradient(var(--bg) 29px, #9f9f9f 29px);
}
.app-btn {
  grid-row: span 2; margin: 5px 0 3px; border: 1px solid #000;
  background: linear-gradient(#d4d4d4, #a8a8a8 60%, #8d8d8d);
  gap: 3px; padding-bottom: 6px;
}
.app-btn .caret, .panel h2 .caret { border-width: 4px 4px 0; }
.titlebar { display: flex; padding-top: 5px; }
.titlebar h1 { flex: 1; text-align: center; padding-left: 14px; }
.qat, .infocenter {
  display: flex; align-items: center; height: 24px;
  background: linear-gradient(#dedede, #d0d0d0); border: 1px solid #8f8f8f;
}
.qat { padding: 0 3px 0 5px; }
.qat button, .infocenter button { width: 24px; height: 22px; }
.qat .drop, .infocenter .drop { width: 12px; }
.sep { width: 6px; height: 20px; background: linear-gradient(#b5b5b5, #b5b5b5) center / 1px 100% no-repeat; }
.infocenter .sep { width: 10px; }
.infocenter input {
  width: 181px; height: 22px; padding: 0 3px; background: var(--bg);
  border: 1px solid #111; font: inherit; font-style: italic;
}
.infocenter input::placeholder { color: #777; opacity: 1; }
.infocenter .login { width: 104px; justify-content: flex-start; gap: 2px; padding-left: 2px; }
.infocenter .login + .drop { width: 16px; }
.winbtns { display: flex; margin-left: 26px; }
.winbtns button { width: 45px; height: 14px; }
.winbtns svg { stroke: #999; }
.tabs { display: flex; padding-left: 4px; color: #222; }
.tabs button { padding: 3px 10px 0; }
.tabs .active { background: linear-gradient(#f4f4f4, var(--bg)); margin-top: 3px; padding-top: 0; border-radius: 2px 2px 0 0; }
.tabs .collapse { margin-left: 10px; gap: 4px; padding-top: 2px; }
.tabs .collapse .caret { border-top-color: #111; }

/* ribbon */
.ribbon { display: flex; height: 94px; color: #333; }
.panel {
  flex: none; display: flex; flex-direction: column;
  border-right: 1px solid; border-image: linear-gradient(var(--bg) 20%, var(--line) 40%) 1;
}
.panel .body { display: flex; height: 76px; padding-top: 3px; }
.panel h2 {
  height: 18px; display: flex; align-items: center; justify-content: center; gap: 6px;
  border-top: 1px solid #d9dadd;
}
.big { flex-direction: column; justify-content: flex-start; height: 72px; padding-top: 3px; }
.big svg { margin-bottom: 4px; }
.big.off { color: #b8b9bc; }
.big.off .caret { border-top-color: #999; margin-top: 3px; }
.rows { display: grid; grid-template-rows: repeat(3, 24px); }
.rows.mid { grid-template-rows: repeat(2, 24px); padding-top: 13px; }
.rows button { justify-content: flex-start; gap: 4px; }
.pair { display: grid; grid-template-rows: repeat(2, 36px); }
.pair button { gap: 5px; }

.select { width: 50px; }
.select .body { padding-left: 6px; }
.select .big { width: 38px; padding-top: 2px; }
.props { width: 83px; }
.props .body { display: grid; grid-template: 36px 36px / 37px 37px; column-gap: 2px; padding-left: 3px; align-items: center; }
.props button { height: 34px; }
.draw { width: 225px; }
.draw .body { padding-left: 6px; }
.gallery { display: flex; width: 126px; height: 68px; margin: 2px 3px 0 5px; border: 1px solid #cfd0d3; }
.shapes { display: grid; grid-template: repeat(3, 22px) / repeat(5, 22px); }
.scroll { display: grid; grid-template-rows: repeat(3, 22px); width: 14px; }
.scroll .caret { border-top-color: #777; }
.scroll .more { border: 1px solid #cfd0d3; }
.workplane { width: 110px; }
.workplane .body { padding-left: 3px; }
.workplane .big { width: 36px; margin-right: 5px; }
.clip { width: 76px; }
.clip .body { padding-left: 7px; gap: 7px; }
.clip .big { width: 38px; }
.geom { width: 111px; }
.geom .body { padding-left: 6px; }
.tiny button { width: 24px; justify-content: center; }
.modify { width: 172px; }
.modify .body { padding-left: 6px; gap: 6px; }
.tools { display: grid; grid-template: repeat(3, 24px) / repeat(5, 25px); }
.measure { width: 56px; }
.measure .body { padding-left: 6px; }
.measure .caret { border-top-color: #777; }
.bim { width: 215px; }
.bim .body { padding-left: 2px; }
.bim .big { width: 70px; }
.family { width: 112px; border: 0; }
.family .big { width: 46px; }
.family .wide { width: 62px; }
.family h2 { background: linear-gradient(#d3dbe6, #e2e6ec); border-top-color: #d3dbe6; }
.tail { flex: 1; background: linear-gradient(#e2e2e3, #cfcfcf 40%, #9c9c9c); }

/* docked panels */
main { flex: 1; min-height: 0; display: flex; padding-top: 26px; }
.properties { width: 217px; display: flex; flex-direction: column; }
.browser { width: 209px; display: flex; flex-direction: column; }
.dock-title {
  display: flex; align-items: center; justify-content: space-between; height: 18px;
  padding: 0 3px; background: var(--dock); margin-bottom: 2px;
}
.dock-title h3 { font-size: 13px; }
.dock-title button { width: 10px; }
.dock-title svg { stroke: #000; stroke-width: 2; }
.dock-body { flex: 1; display: flex; flex-direction: column; border: solid #6d6d6d; border-width: 2px 0 0 1px; }
.preview { display: flex; align-items: center; justify-content: space-between; height: 73px; padding: 2px 3px 0 4px; }
.preview .caret { border-top-color: #999; }
.type-row { display: flex; gap: 6px; height: 25px; color: #aaa; }
.type-row select {
  appearance: none; width: 133px; padding: 0 3px; border: 1px solid #a5a7a5; font: inherit; color: #111;
  background: linear-gradient(45deg, transparent 50%, #555 50%, #555 60%, transparent 60%) right 8px center / 5px 8px no-repeat,
    linear-gradient(-45deg, transparent 50%, #555 50%, #555 60%, transparent 60%) right 4px center / 5px 8px no-repeat, var(--bg);
}
.type-row button { gap: 4px; height: 22px; color: #aaa; }
.type-row svg { stroke: #aaa; }
table { width: 216px; border-collapse: collapse; table-layout: fixed; }
tr { height: 20px; }
td, th { padding: 0 0 0 2px; line-height: 18px; font-weight: 400; text-align: left; white-space: nowrap; }
th { background: #dadada; }
th svg { float: right; margin: 4px 5px 0 0; stroke: #000; stroke-width: 1.5; }
td { border-bottom: 1px dotted #777; border-right: 1px dotted #777; }
td:first-child { padding-left: 10px; }
.off td { color: #8a8a8a; }
td.focus { outline: 1px solid #111; outline-offset: -1px; }
input[type="checkbox"] {
  appearance: none; display: flex; justify-content: center; width: 13px; height: 13px;
  margin: 2px 0 0 1px; border: 1px solid #333;
}
input[type="checkbox"]:checked::after {
  content: ""; width: 5px; height: 8px; border: solid #444; border-width: 0 1px 1px 0; transform: rotate(45deg);
}
.dock-foot { display: flex; justify-content: space-between; align-items: center; margin-top: auto; padding: 0 2px 3px; }
.dock-foot a { color: #0a6ad0; }
.dock-foot button { width: 73px; height: 19px; background: #c9c9c9; color: #8a8a8a; }

/* drawing view */
.view {
  flex: 1; display: grid; grid-template: 1fr 19px / 1fr 18px;
  margin: 0 6px; border-left: 2px solid #6d6d6d;
}
.canvas { position: relative; border-top: 1px solid #666; background: linear-gradient(#858585, #929292 35%, #a6a6a6 60%, #bebebe); }
.note { position: absolute; font: 29px/32px "Liberation Sans", "Noto Sans CJK SC", sans-serif; font-weight: 300; }
.step { left: 18px; top: 74px; }
.credit { left: 51px; top: 491px; font-size: 28px; color: #00f; }
.planes { position: absolute; left: 305px; top: 130px; stroke-width: 3; }
.doc-btns { position: absolute; right: 3px; top: 9px; display: flex; gap: 6px; }
.cube { position: absolute; right: 16px; top: 46px; stroke: #777; }
.cube text { font-size: 16px; font-weight: 300; fill: #777; stroke: none; }
.navbar {
  position: absolute; right: 1px; top: 127px; width: 34px; height: 118px; padding: 1px;
  display: flex; flex-direction: column; border: 2px solid #737373; border-radius: 6px; background: #acacac;
}
.navbar button { align-self: flex-end; }
.navbar .wheel, .navbar .zoom { align-self: stretch; flex-direction: column; gap: 4px; }
.navbar .wheel { padding: 5px 0 4px; border-bottom: 1px solid #808080; }
.navbar .zoom { flex: 1; }
.navbar .caret { border-top-color: #666; }
.vscroll { grid-row: span 2; display: flex; flex-direction: column; align-items: center; padding: 6px 0 3px; }
.vscroll button svg, .arrow svg { stroke-width: 2; }
.vscroll .thumb { margin: auto 0; }
.thumb { width: 16px; height: 16px; background: #cbcbcb; }
.grip { margin-top: 9px; stroke-width: 2; }
.viewbar { display: flex; align-items: center; padding-right: 2px; }
.viewbar button { width: 21px; height: 18px; }
.viewbar .scale { width: 77px; padding-left: 9px; font: 11px/16px "Liberation Mono", monospace; }
.viewbar .arrow { width: 14px; }
.viewbar .thumb { margin: 0 auto; }

/* project browser */
.tree { list-style: none; display: block; }
.tree li { display: flex; height: 20px; }
.tree b { font-weight: 400; line-height: 19px; padding-left: 3px; }
.tree .sub { padding-left: 7px; }
.cell {
  --h: 0; --v: 0; --y: 0;
  width: 20px; display: flex; align-items: center; justify-content: center;
  background:
    repeating-linear-gradient(#aaa 0 1px, transparent 1px 2px) 50% var(--y) / 1px var(--v) no-repeat,
    repeating-linear-gradient(90deg, #aaa 0 1px, transparent 1px 2px) right center / var(--h) 1px no-repeat;
}
.line { --v: 100%; }
.start { --v: 50%; --y: 100%; }
.end { --v: 50%; }
.arm { --h: 50%; }
.cell button {
  width: 9px; height: 9px; border: 1px solid #999;
  background: linear-gradient(#1a4fa0, #1a4fa0) center / 5px 1px no-repeat, #f4f5f8;
}
.cell .plus {
  background: linear-gradient(#1a4fa0, #1a4fa0) center / 5px 1px no-repeat,
    linear-gradient(#1a4fa0, #1a4fa0) center / 1px 5px no-repeat, #f4f5f8;
}

.status {
  display: flex; align-items: center; height: 23px; padding: 0 15px 0 1px; gap: 2px;
  border-top: 1px solid #8f8f8f; background: linear-gradient(#e4e4e5, #cfcfcf 60%, #b9b9b9);
}
.status span { flex: 1; padding-top: 2px; }
.status button { width: 24px; height: 22px; background: #dcdcdc; border: 1px solid #c4c4c4; }
```
